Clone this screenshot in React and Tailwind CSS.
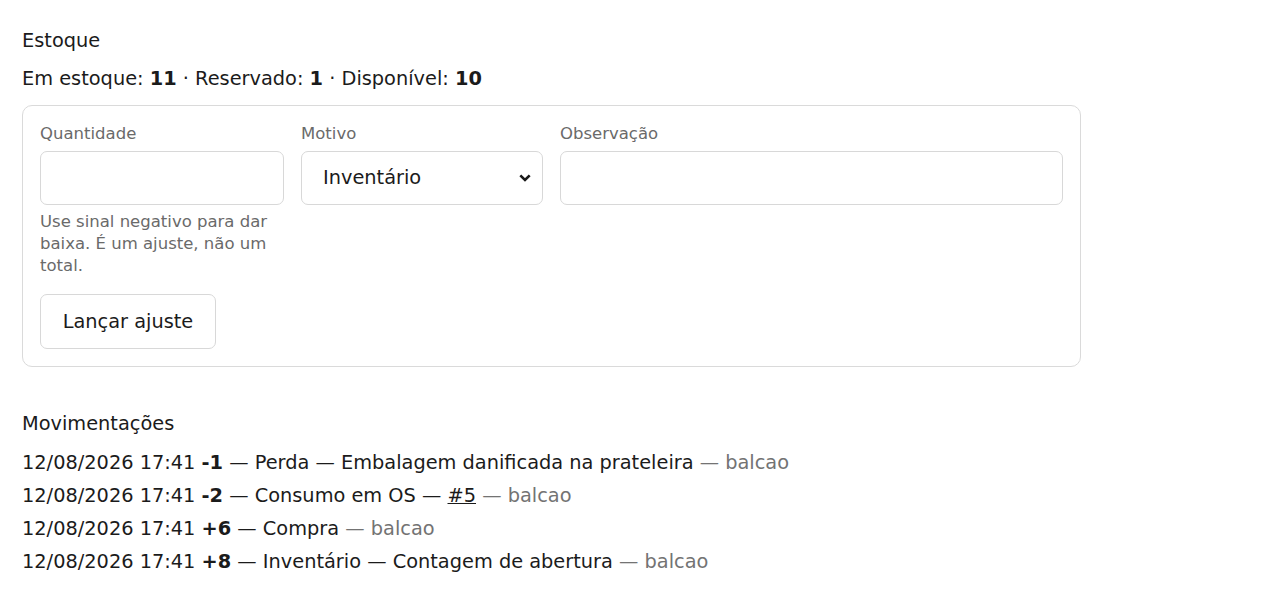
import React from "react";

const rows = [
  { v: "-1", parts: [" — Perda — Embalagem danificada na prateleira"], link: null },
  { v: "-2", parts: [" — Consumo em OS — "], link: "#5" },
  { v: "+6", parts: [" — Compra"], link: null },
  { v: "+8", parts: [" — Inventário — Contagem de abertura"], link: null },
];

export default function App() {
  return (
    <div
      className="min-h-[599px] bg-white text-[#1b1b1b] pl-[22px] pt-[26px]"
      style={{ fontFamily: '"DejaVu Sans", "Liberation Sans", sans-serif' }}
    >
      <div className="w-[1059px]">
        <h2 className="text-[19.35px] leading-[29px] font-normal">Estoque</h2>
        <p className="mt-[9px] text-[19.35px] leading-[29px]">
          Em estoque: <b className="font-bold">11</b> · Reservado: <b className="font-bold">1</b> · Disponível: <b className="font-bold">10</b>
        </p>

        <div className="mt-[12px] border border-[#dadada] rounded-[10px] p-[17px]">
          <div className="grid grid-cols-[244px_242px_503px] gap-x-[17px]">
            <div className="flex flex-col">
              <label className="pt-[1px] text-[16.5px] leading-[20px] text-[#6a6a6a]">Quantidade</label>
              <input
                type="text"
                className="mt-[7px] h-[54px] w-full rounded-[7px] border border-[#d8d8d8] bg-white px-[22px] text-[19.35px] outline-none"
              />
              <p className="mt-[6px] text-[16.5px] leading-[22px] text-[#6a6a6a]">
                Use sinal negativo para dar baixa. É um ajuste, não um total.
              </p>
            </div>
            <div className="flex flex-col">
              <label className="pt-[1px] text-[16.5px] leading-[20px] text-[#6a6a6a]">Motivo</label>
              <div className="relative mt-[7px] h-[54px] w-full rounded-[7px] border border-[#d8d8d8] bg-white flex items-center pl-[21px]">
                <span className="text-[19.35px] text-[#1b1b1b]">Inventário</span>
                <svg
                  className="absolute right-[11px] top-1/2 -translate-y-1/2"
                  width="12"
                  height="9"
                  viewBox="0 0 12 9"
                >
                  <path d="M1.3 1.8 L6 6.5 L10.7 1.8" fill="none" stroke="#1b1b1b" strokeWidth="2.6" />
                </svg>
              </div>
            </div>
            <div className="flex flex-col">
              <label className="pt-[1px] text-[16.5px] leading-[20px] text-[#6a6a6a]">Observação</label>
              <input
                type="text"
                className="mt-[7px] h-[54px] w-full rounded-[7px] border border-[#d8d8d8] bg-white px-[22px] text-[19.35px] outline-none"
              />
            </div>
          </div>
          <button className="mt-[17px] h-[55px] w-[176px] rounded-[7px] border border-[#d8d8d8] bg-white text-[19.35px] text-[#1b1b1b]">
            Lançar ajuste
          </button>
        </div>

        <h3 className="mt-[42px] text-[19.35px] leading-[29px] font-normal">Movimentações</h3>
        <ul className="mt-[8px]">
          {rows.map((r, i) => (
            <li key={i} className="text-[19.35px] leading-[33px]">
              12/08/2026 17:41 <b className="font-bold">{r.v}</b>
              {r.parts[0]}
              {r.link && <a className="underline">{r.link}</a>}
              <span className="text-[#737373]"> — balcao</span>
            </li>
          ))}
        </ul>
      </div>
    </div>
  );
}
